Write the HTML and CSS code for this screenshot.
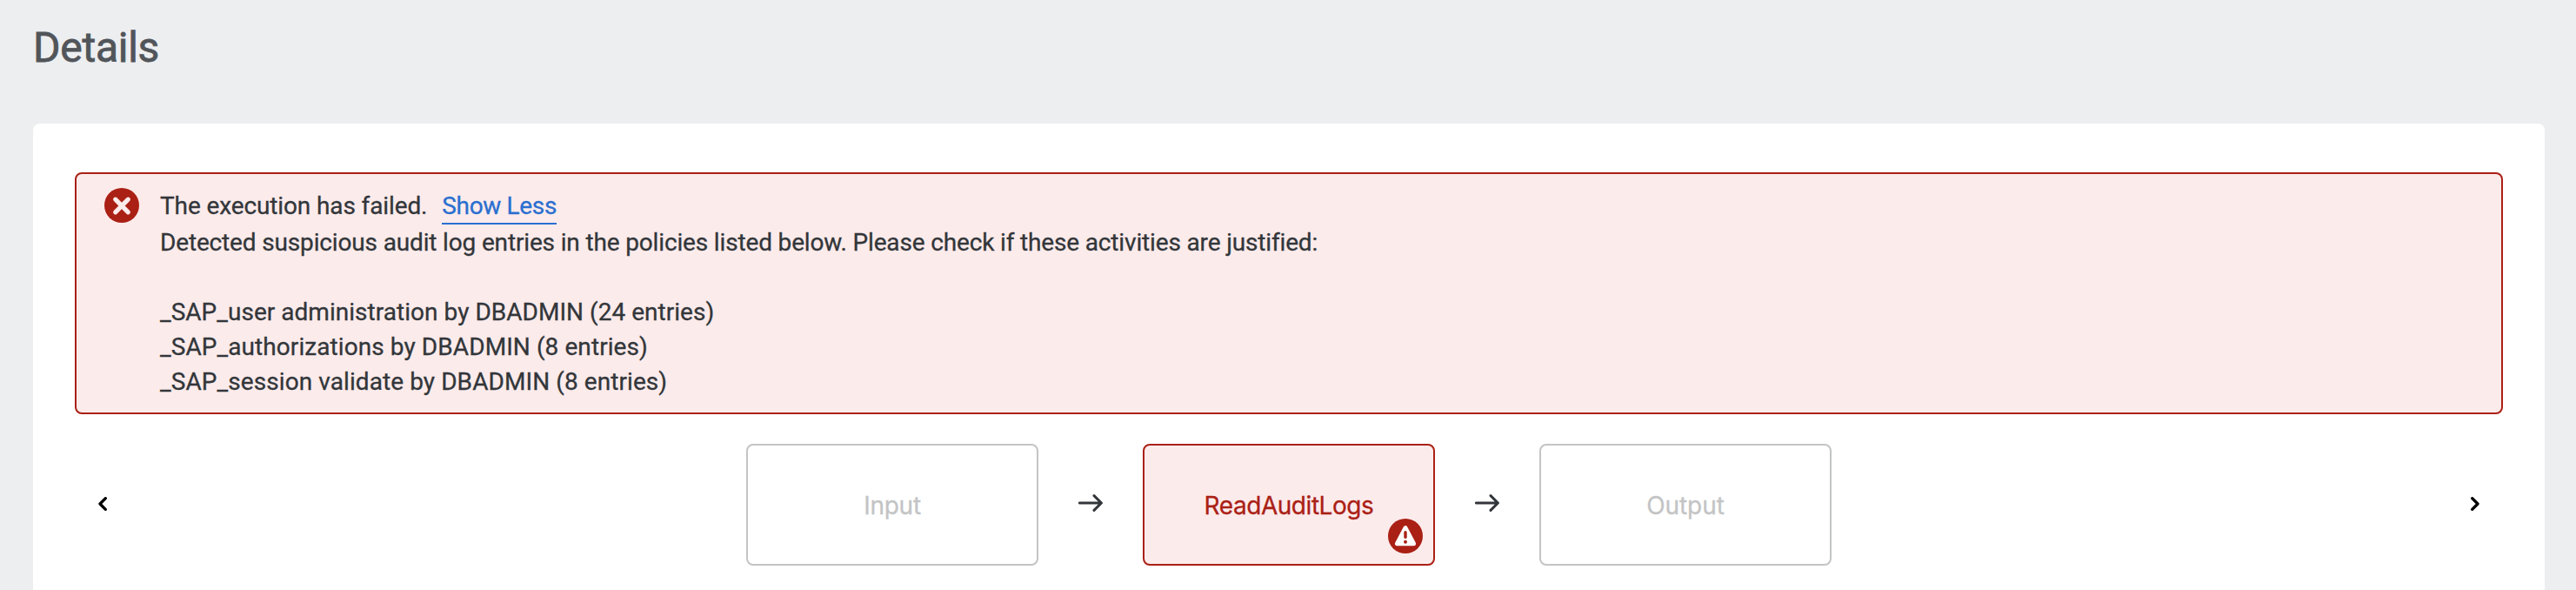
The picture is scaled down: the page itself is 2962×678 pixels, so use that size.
FILE: index.html
```html
<!DOCTYPE html>
<html lang="en">
<head>
<meta charset="utf-8">
<title>Details</title>
<link rel="stylesheet" href="styles.css">
</head>
<body>
<main class="page">
  <h1 class="title">Details</h1>
  <section class="card">
    <div class="banner">
      <svg class="banner-icon" viewBox="0 0 40 40"><circle cx="20" cy="20" r="20" fill="#aa2015"/><path d="M12.7 13.2L27.3 27.8M27.3 13.2L12.7 27.8" stroke="#fcebeb" stroke-width="5.2" stroke-linecap="round"/></svg>
      <div class="message">
        <p class="line headline"><span class="summary">The execution has failed.</span><a class="toggle">Show Less</a></p>
        <p class="line intro">Detected suspicious audit log entries in the policies listed below. Please check if these activities are justified:</p>
        <p class="line entry gap">_SAP_user administration by DBADMIN (24 entries)</p>
        <p class="line entry">_SAP_authorizations by DBADMIN (8 entries)</p>
        <p class="line entry">_SAP_session validate by DBADMIN (8 entries)</p>
      </div>
    </div>
    <div class="flow">
      <svg class="chevron" viewBox="0 0 10 16"><path d="M8.3 1.7L2 8l6.3 6.3"/></svg>
      <div class="steps">
        <div class="step"><span class="name name-input">Input</span></div>
        <svg class="arrow" viewBox="0 0 28 20"><path d="M1.4 10H26M18 1.6l8.4 8.4-8.4 8.4"/></svg>
        <div class="step step-error"><span class="name name-read">ReadAuditLogs</span>
          <svg class="badge" viewBox="0 0 40 40"><circle cx="20" cy="20" r="20" fill="#aa2015"/><path d="M20 10.7L10.5 28.7H29.5Z" fill="#fff" stroke="#fff" stroke-width="5" stroke-linejoin="round"/><path d="M20 15.8v5.4" stroke="#aa2015" stroke-width="3.4" stroke-linecap="round"/><circle cx="20" cy="26.7" r="2" fill="#aa2015"/></svg>
        </div>
        <svg class="arrow" viewBox="0 0 28 20"><path d="M1.4 10H26M18 1.6l8.4 8.4-8.4 8.4"/></svg>
        <div class="step"><span class="name name-output">Output</span></div>
      </div>
      <svg class="chevron" viewBox="0 0 10 16"><path d="M1.7 1.7L8 8l-6.3 6.3"/></svg>
    </div>
  </section>
</main>
</body>
</html>
```
FILE: styles.css
```css
* { box-sizing: border-box; }
html, body { margin: 0; height: 100%; }
body {
  background: #edeef0;
  color: #32363a;
  font-family: Roboto, "Liberation Sans", sans-serif;
  font-size: 28px;
  overflow: hidden;
  -webkit-text-stroke: 0.3px currentColor;
}
.page { display: flex; flex-direction: column; height: 678px; padding: 0 36px 0 38px; }
.title {
  height: 142px;
  margin: 0;
  padding-top: 26px;
  color: #51555a;
  font-size: 48px;
  font-weight: 400;
  line-height: 57px;
  letter-spacing: -0.25px;
  -webkit-text-stroke-width: 0.8px;
}
.card { flex: 1; padding: 56px 48px 0; background: #fff; border-radius: 8px 8px 0 0; }
.banner {
  display: flex;
  gap: 24px;
  height: 278px;
  padding: 16px 32px;
  border: 2px solid #aa2015;
  border-radius: 8px;
  background: #fcebeb;
}
.banner-icon { width: 40px; height: 40px; flex: none; }
.message { padding-top: 1px; }
.line { margin: 0; height: 40px; line-height: 40px; white-space: nowrap; }
.headline { display: flex; gap: 17px; height: 42px; letter-spacing: -0.12px; }
.toggle { height: 41px; border-bottom: 2px solid #2a6fd0; color: #2a6fd0; letter-spacing: -0.35px; }
.intro { letter-spacing: -0.155px; }
.entry { letter-spacing: 0.08px; }
.gap { margin-top: 40px; letter-spacing: 0.03px; }
.flow { display: flex; align-items: center; justify-content: space-between; height: 140px; margin-top: 34px; padding: 0 27px; }
.chevron { width: 10px; height: 16px; fill: none; stroke: #000; stroke-width: 3.3; stroke-linecap: round; stroke-linejoin: round; margin-bottom: 3px; }
.steps { display: flex; align-items: center; gap: 46px; }
.step {
  position: relative;
  display: flex;
  align-items: center;
  justify-content: center;
  width: 336px;
  height: 140px;
  border: 2px solid #c3c4c5;
  border-radius: 8px;
  color: #c3c4c5;
}
.step-error { border-color: #aa2015; background: #fcebeb; color: #aa2015; }
.name { padding-top: 2px; font-family: Inter, Roboto, sans-serif; line-height: 40px; }
.name-input { letter-spacing: -0.25px; }
.name-read { letter-spacing: -0.45px; }
.name-output { letter-spacing: -0.06px; }
.badge { position: absolute; right: 12px; bottom: 12px; width: 40px; height: 40px; }
.arrow { width: 28px; height: 20px; margin-bottom: 4px; fill: none; stroke: #32363a; stroke-width: 3; stroke-linecap: round; stroke-linejoin: round; }
```
